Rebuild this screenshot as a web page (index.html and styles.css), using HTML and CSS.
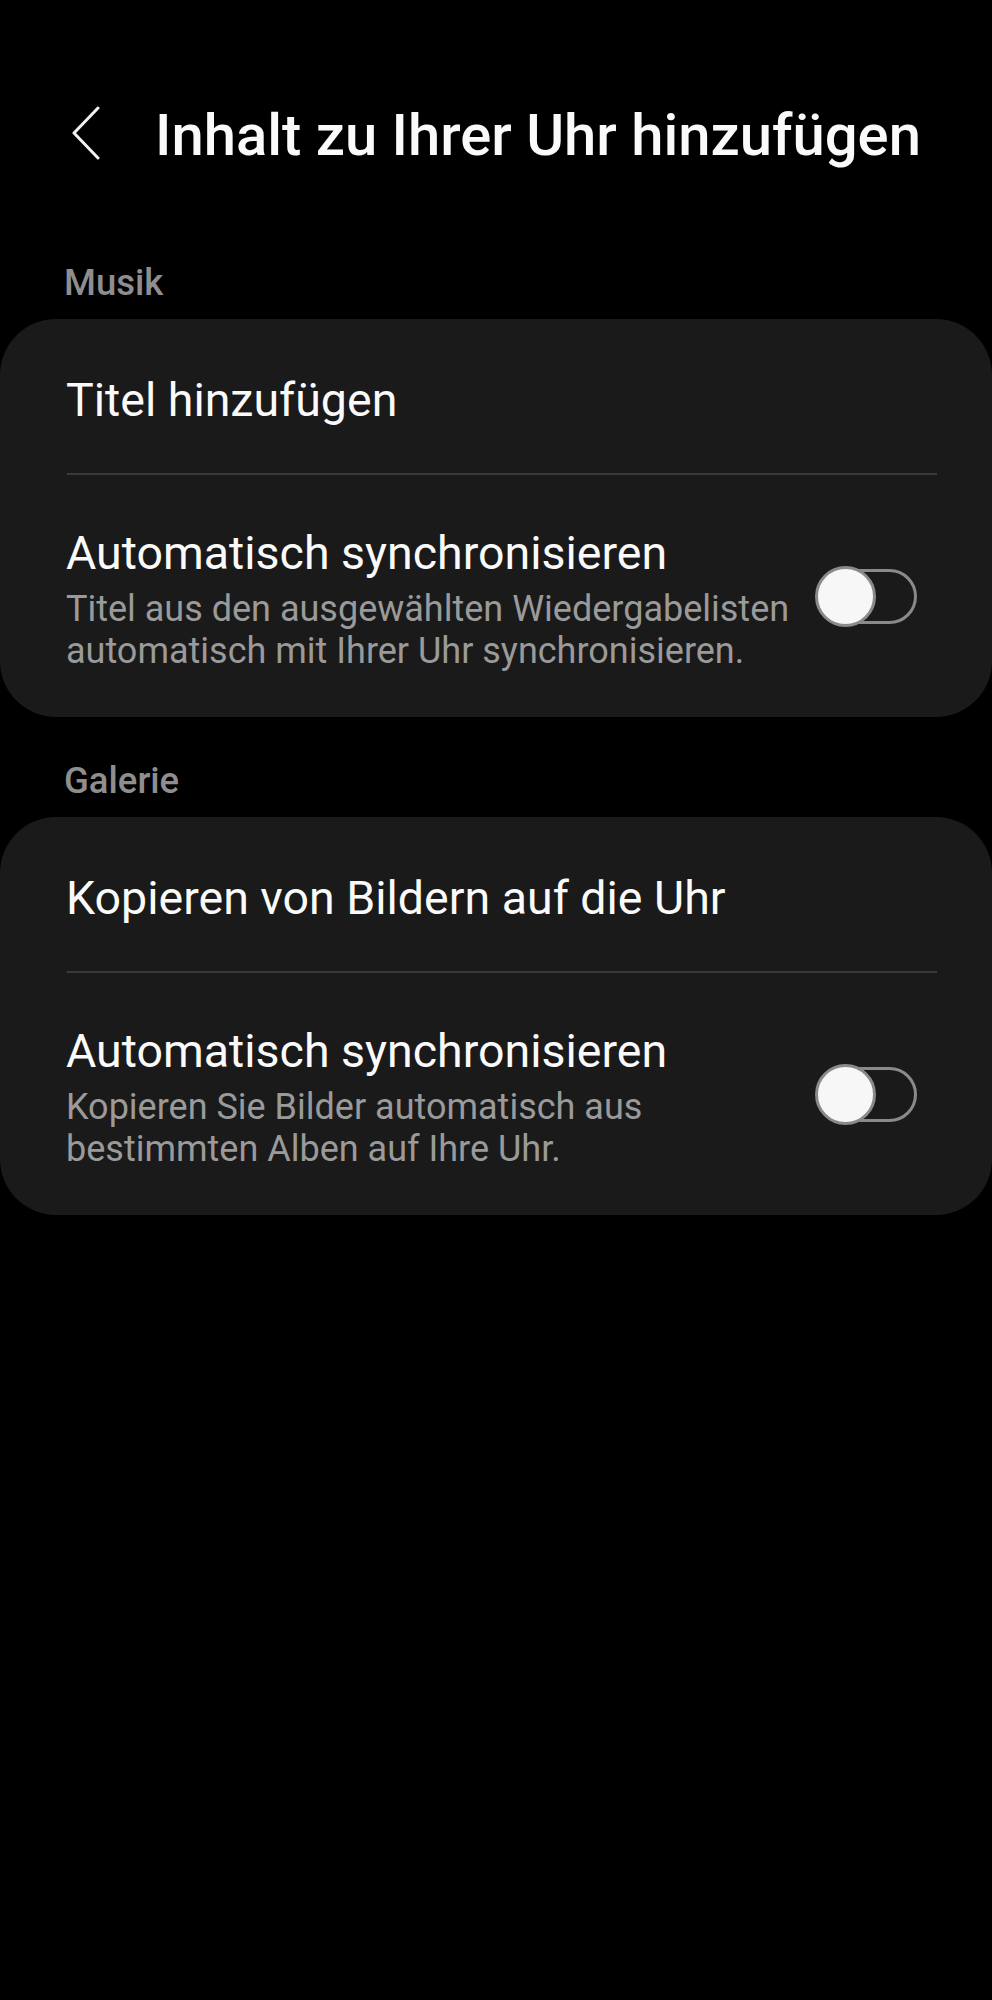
FILE: index.html
```html
<!DOCTYPE html>
<html lang="de">
<head>
<meta charset="utf-8">
<title>Inhalt zu Ihrer Uhr hinzufügen</title>
<link rel="stylesheet" href="styles.css">
</head>
<body>
<header class="header">
  <svg class="back" viewBox="0 0 28 54" width="28" height="54" aria-hidden="true">
    <polyline points="26,2 2,27 26,52" fill="none" stroke="#f2f2f2" stroke-width="3" stroke-linecap="round" stroke-linejoin="round"/>
  </svg>
  <h1 class="title">Inhalt zu Ihrer Uhr hinzufügen</h1>
</header>

<main>
  <section class="group">
    <h2 class="label">Musik</h2>
    <div class="card">
      <div class="row row-single">
        <span class="row-title">Titel hinzufügen</span>
      </div>
      <div class="divider"></div>
      <div class="row row-toggle">
        <div class="row-text">
          <div class="row-title">Automatisch synchronisieren</div>
          <div class="row-sub">Titel aus den ausgewählten Wiedergabelisten automatisch mit Ihrer Uhr synchronisieren.</div>
        </div>
        <div class="switch"><span class="thumb"></span></div>
      </div>
    </div>
  </section>

  <section class="group">
    <h2 class="label">Galerie</h2>
    <div class="card">
      <div class="row row-single">
        <span class="row-title">Kopieren von Bildern auf die Uhr</span>
      </div>
      <div class="divider"></div>
      <div class="row row-toggle">
        <div class="row-text">
          <div class="row-title">Automatisch synchronisieren</div>
          <div class="row-sub">Kopieren Sie Bilder automatisch aus bestimmten Alben auf Ihre Uhr.</div>
        </div>
        <div class="switch"><span class="thumb"></span></div>
      </div>
    </div>
  </section>
</main>
</body>
</html>
```
FILE: styles.css
```css
html, body {
  margin: 0;
  padding: 0;
  background: #000;
}

body {
  font-family: Roboto, "Noto Sans", "Liberation Sans", sans-serif;
  color: #fafafa;
  min-height: 2000px;
}

.header {
  display: flex;
  align-items: center;
  padding: 100px 0 0 72px;
  gap: 55px;
}

.back {
  display: block;
  flex: none;
  margin-top: -5px;
}

.title {
  margin: 0;
  font-size: 58px;
  line-height: 70px;
  font-weight: 500;
  color: #fafafa;
  white-space: nowrap;
}

.group {
  display: flex;
  flex-direction: column;
}

.label {
  margin: 92px 0 15px 0;
  padding-left: 64px;
  font-size: 36.5px;
  line-height: 42px;
  font-weight: 500;
  color: #8e8e8e;
}

.group + .group .label {
  margin-top: 43px;
}

.card {
  background: #1a1a1a;
  border-radius: 56px;
  height: 398px;
  box-sizing: border-box;
}

.row {
  padding-left: 66px;
  padding-right: 75px;
}

.row-single {
  padding-top: 53px;
  padding-bottom: 45px;
}

.row-title {
  font-size: 46.5px;
  line-height: 56px;
  font-weight: 400;
  color: #fafafa;
  white-space: nowrap;
}

.divider {
  height: 2px;
  background: #3a3a3a;
  margin: 0 55px 0 67px;
}

.row-toggle {
  display: flex;
  align-items: center;
  gap: 14px;
  padding-top: 50px;
  padding-bottom: 46px;
}

.row-text {
  flex: 1;
  min-width: 0;
}

.row-sub {
  margin-top: 7px;
  font-size: 36px;
  line-height: 42px;
  color: #9a9a9a;
}

.switch {
  position: relative;
  flex: none;
  width: 101px;
  height: 55px;
  box-sizing: border-box;
  border: 3px solid #8a8a8a;
  border-radius: 28px;
  margin-top: -5px;
}

.thumb {
  position: absolute;
  left: -4px;
  top: -6px;
  width: 61px;
  height: 61px;
  box-sizing: border-box;
  border-radius: 50%;
  background: #f7f7f7;
  border: 3px solid #8a8a8a;
}
```
